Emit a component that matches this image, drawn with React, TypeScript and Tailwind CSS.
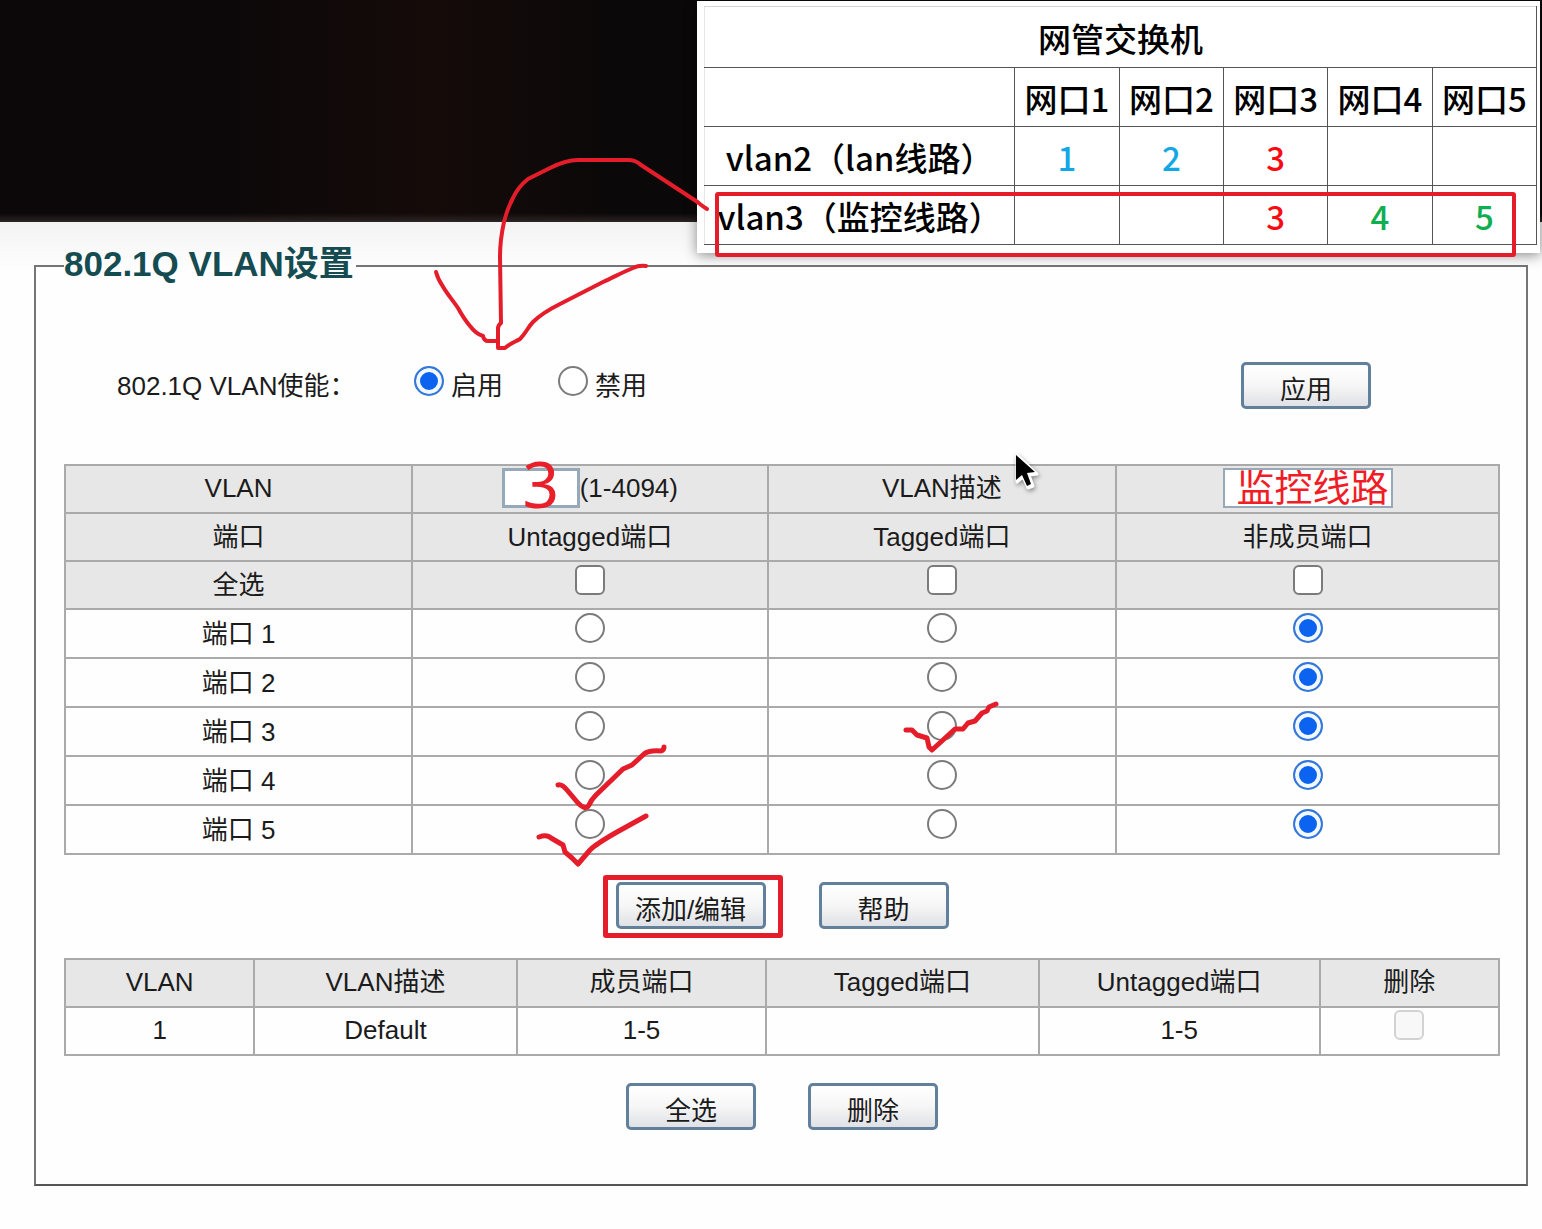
import type { ReactNode } from "react";

const overviewPorts = ["网口1", "网口2", "网口3", "网口4", "网口5"];

const overviewRows = [
  {
    label: "vlan2（lan线路）",
    cells: [
      { value: "1", tone: "text-[#12a8e6]" },
      { value: "2", tone: "text-[#12a8e6]" },
      { value: "3", tone: "text-[#fb0a12]" },
      { value: "", tone: "" },
      { value: "", tone: "" },
    ],
  },
  {
    label: "vlan3（监控线路）",
    cells: [
      { value: "", tone: "" },
      { value: "", tone: "" },
      { value: "3", tone: "text-[#fb0a12]" },
      { value: "4", tone: "text-[#0fae50]" },
      { value: "5", tone: "text-[#0fae50]" },
    ],
  },
];

const radioClass =
  "block size-[30px] shrink-0 appearance-none rounded-full border-2 border-[#7b7b7b] bg-white checked:border-[#3578d8] checked:bg-[#0b63f0] checked:shadow-[inset_0_0_0_4px_#f2f8ff]";

const checkboxClass =
  "mx-auto block size-[30px] appearance-none rounded-[6px] border-2 border-[#7b7b7b] bg-white disabled:border-[#d2d2d2] disabled:bg-[#f8f8f8]";

function PushButton({ children, wide = false }: { children: ReactNode; wide?: boolean }) {
  return (
    <button
      type="button"
      className={`${
        wide ? "w-[150px]" : "w-[130px]"
      } h-[47px] rounded-[5px] border-[3px] border-[#627f9b] bg-linear-to-b from-white via-[#f6f6f6] to-[#dfe1e6] pt-[8px] text-[26px] leading-[32px]`}
    >
      {children}
    </button>
  );
}

function OverviewPanel() {
  return (
    <aside className="absolute top-[1px] right-[2px] w-[843px] bg-white pt-[5px] pr-[3px] pb-[8px] pl-[7px] shadow-[0_2px_12px_rgba(0,0,0,0.45)]">
      <table className="w-full table-fixed border-collapse text-center font-['Noto_Sans_CJK_SC',sans-serif] text-[33px] leading-[40px] font-medium text-black">
        <colgroup>
          <col className="w-[37.3%]" />
          <col />
          <col />
          <col />
          <col />
          <col />
        </colgroup>
        <thead>
          <tr className="h-[61px]">
            <th
              colSpan={6}
              className="border border-[#555] border-t-[#d5d5d5] border-l-[#e5e5e5] p-0 pt-[2px] font-medium"
            >
              网管交换机
            </th>
          </tr>
          <tr className="h-[59px]">
            <td className="border border-[#555] border-l-[#e5e5e5]" />
            {overviewPorts.map((port) => (
              <th key={port} className="border border-[#555] p-0 pt-[2px] font-medium">
                {port}
              </th>
            ))}
          </tr>
        </thead>
        <tbody>
          {overviewRows.map((row) => (
            <tr key={row.label} className="h-[59px]">
              <th className="border border-[#555] border-l-[#e5e5e5] p-0 pt-[2px] font-medium whitespace-nowrap">
                {row.label}
              </th>
              {row.cells.map((cell, i) => (
                <td key={i} className={`border border-[#555] p-0 pt-[2px] ${cell.tone}`}>
                  {cell.value}
                </td>
              ))}
            </tr>
          ))}
        </tbody>
      </table>
      <div className="absolute top-[191px] right-[24px] left-[18px] h-[65px] rounded-[3px] border-4 border-[#e51d2a]" />
    </aside>
  );
}

const cell = "border-2 border-[#aaaaaa] p-0";

function PortTable() {
  return (
    <table className="w-full table-fixed border-collapse text-center">
      <colgroup>
        <col className="w-[24.2%]" />
        <col className="w-[24.8%]" />
        <col className="w-[24.3%]" />
        <col />
      </colgroup>
      <thead className="bg-[#e7e7e7]">
        <tr className="h-[48px]">
          <th className={`${cell} pb-[3px] font-normal`}>VLAN</th>
          <td className={cell}>
            <label className="flex items-center justify-center pb-[3px]">
              <span className="relative block">
                <input
                  type="text"
                  aria-label="VLAN ID"
                  className="block h-[40px] w-[78px] border-[3px] border-[#96a9b8] bg-white"
                />
                <span className="pointer-events-none absolute inset-0 flex items-center justify-center pb-[8px] font-['Noto_Sans',sans-serif] text-[64px] leading-[32px] text-[#e9202a]">
                  3
                </span>
              </span>
              <span>(1-4094)</span>
            </label>
          </td>
          <th className={`${cell} pb-[3px] font-normal`}>VLAN描述</th>
          <td className={`${cell} pb-[3px]`}>
            <input
              type="text"
              aria-label="VLAN描述"
              defaultValue="监控线路"
              className="mx-auto block h-[40px] w-[170px] border-2 border-[#96a9b8] bg-white pb-[6px] pl-[12px] font-['Noto_Sans_CJK_SC',sans-serif] text-[38px] leading-[30px] text-[#f01d27]"
            />
          </td>
        </tr>
        <tr className="h-[48px]">
          <th className={`${cell} font-normal`}>端口</th>
          <th className={`${cell} font-normal`}>Untagged端口</th>
          <th className={`${cell} font-normal`}>Tagged端口</th>
          <th className={`${cell} font-normal`}>非成员端口</th>
        </tr>
        <tr className="h-[48px]">
          <th className={`${cell} font-normal`}>全选</th>
          {["Untagged端口", "Tagged端口", "非成员端口"].map((name) => (
            <td key={name} className={`${cell} pt-[3px] align-top`}>
              <input type="checkbox" aria-label={`全选 ${name}`} className={checkboxClass} />
            </td>
          ))}
        </tr>
      </thead>
      <tbody>
        {[1, 2, 3, 4, 5].map((port) => (
          <tr key={port} className="h-[49px]">
            <th className={`${cell} font-normal`}>端口 {port}</th>
            {["Untagged", "Tagged", "非成员"].map((kind) => (
              <td key={kind} className={`${cell} pt-[3px] align-top`}>
                <span className="flex justify-center">
                  <input
                    type="radio"
                    name={`port-${port}`}
                    aria-label={`端口 ${port} ${kind}`}
                    defaultChecked={kind === "非成员"}
                    className={radioClass}
                  />
                </span>
              </td>
            ))}
          </tr>
        ))}
      </tbody>
    </table>
  );
}

function VlanTable() {
  return (
    <table className="w-full table-fixed border-collapse text-center">
      <colgroup>
        <col className="w-[13.2%]" />
        <col className="w-[18.3%]" />
        <col className="w-[17.4%]" />
        <col className="w-[19%]" />
        <col className="w-[19.6%]" />
        <col />
      </colgroup>
      <thead className="bg-[#e7e7e7]">
        <tr className="h-[48px]">
          {["VLAN", "VLAN描述", "成员端口", "Tagged端口", "Untagged端口", "删除"].map((h) => (
            <th key={h} className={`${cell} pb-[3px] font-normal`}>
              {h}
            </th>
          ))}
        </tr>
      </thead>
      <tbody>
        <tr className="h-[48px]">
          <td className={`${cell} pb-[2px]`}>1</td>
          <td className={`${cell} pb-[2px]`}>Default</td>
          <td className={`${cell} pb-[2px]`}>1-5</td>
          <td className={cell} />
          <td className={`${cell} pb-[2px]`}>1-5</td>
          <td className={`${cell} pt-[2px] align-top`}>
            <input type="checkbox" disabled aria-label="删除 VLAN 1" className={checkboxClass} />
          </td>
        </tr>
      </tbody>
    </table>
  );
}

function Annotations() {
  return (
    <svg
      aria-hidden="true"
      width="1542"
      height="1229"
      viewBox="0 0 1542 1229"
      className="pointer-events-none absolute top-0 left-0"
      fill="none"
      stroke="#e51d2a"
      strokeLinecap="round"
      strokeLinejoin="round"
    >
      <g strokeWidth="4">
        <path d="M707 209 C702 206 699 203 696 201 L667 182 L641 165 Q636 160 628 160 L578 160 Q566 160 550 168 L528 179 Q518 187 513 198 Q507 209 504 222 Q500 240 500 257 L501 323 Q498 325 498 329 L498 348 L505 348 C511 343 515 342 520 339 C526 333 528 327 533 322 C540 315 550 309 560 304 L603 282 C614 277 623 272 633 268 Q639 265 646 266" />
        <path d="M436 272 C438 279 439 281 442 285 C447 294 452 299 458 308 Q464 319 470 326 Q476 334 483 336 Q484 341 488 341 L498 341" />
      </g>
      <g strokeWidth="5">
        <path d="M558 785 Q562 784 567 790 L578 803 Q586 811 589 805 Q591 800 596 795 L623 769 L632 765 L644 754 Q649 750 661 751 Q664 750 664 747" />
        <path d="M539 837 Q547 834 551 838 L563 845 L565 852 L572 858 L578 864 L590 850 Q596 844 617 832 L646 816" />
        <path d="M906 730 L912 730 L917 735 L927 738 L929 747 L932 750 L955 729 L963 729 L968 723 L975 721 L982 713 L987 711 L989 707 L996 704" />
      </g>
      <path
        d="M1017 455 L1017 482 L1023 477 L1028 488 L1033 486 L1029 475 L1037 474 Z"
        fill="#ffffff"
        stroke="#ffffff"
        strokeWidth="3"
        className="drop-shadow-[1px_2px_2px_rgba(0,0,0,0.4)]"
      />
      <path d="M1016 455 L1016 480 L1022 475 L1027 486 L1031 484 L1027 473 L1035 472 Z" fill="#000000" stroke="none" />
    </svg>
  );
}

export default function App() {
  return (
    <div className="relative min-h-screen overflow-hidden bg-[#fefefe] font-['Liberation_Sans','Noto_Sans_CJK_SC',sans-serif] text-[26px] leading-[36px] text-[#1b1b1b]">
      <div className="h-[222px] bg-linear-to-r from-[#0c0809] from-15% via-[#150b09] via-28% to-[#0b0809] to-40%">
        <div className="h-full bg-linear-to-b from-transparent from-96% to-[#2b2523]" />
      </div>
      <main className="bg-linear-to-b from-[#f3f3f3] to-[#fefefe] to-[50px] pt-[20px] pr-[14px] pb-[42px] pl-[34px]">
        <fieldset className="border-2 border-[#757575] border-b-[#555] pr-[26px] pb-[54px] pl-[28px]">
          <legend className="pr-[2px] pb-[4px] text-[35px] leading-[44px] font-bold text-[#154c52]">
            802.1Q VLAN设置
          </legend>

          <div className="flex items-center pt-[72px] pr-[129px] pl-[53px]">
            <span className="w-[297px] whitespace-nowrap">802.1Q VLAN使能：</span>
            <label className="flex w-[144px] items-start gap-[7px] pb-[2px]">
              <input type="radio" name="vlan-enable" defaultChecked className={radioClass} />
              <span className="pt-[2px]">启用</span>
            </label>
            <label className="flex items-start gap-[7px] pb-[2px]">
              <input type="radio" name="vlan-enable" className={radioClass} />
              <span className="pt-[2px]">禁用</span>
            </label>
            <span className="ml-auto">
              <PushButton>应用</PushButton>
            </span>
          </div>

          <div className="pt-[55px]">
            <PortTable />
          </div>

          <div className="flex justify-center gap-[53px] pt-[27px]">
            <span className="relative">
              <PushButton wide>添加/编辑</PushButton>
              <span className="pointer-events-none absolute -top-[7px] -right-[17px] -left-[13px] h-[63px] rounded-[3px] border-[5px] border-[#e51d2a]" />
            </span>
            <PushButton>帮助</PushButton>
          </div>

          <div className="pt-[29px]">
            <VlanTable />
          </div>

          <div className="flex justify-center gap-[52px] pt-[27px]">
            <PushButton>全选</PushButton>
            <PushButton>删除</PushButton>
          </div>
        </fieldset>
      </main>
      <OverviewPanel />
      <Annotations />
    </div>
  );
}
